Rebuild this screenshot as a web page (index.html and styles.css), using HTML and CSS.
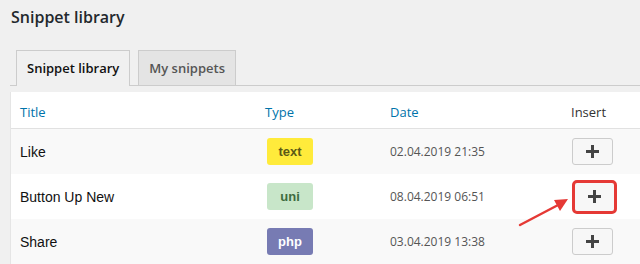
FILE: index.html
```html
<!DOCTYPE html>
<html lang="en">
<head>
    <meta charset="UTF-8">
    <meta name="viewport" content="width=device-width, initial-scale=1.0">
    <title>Snippet library</title>
    <link rel="stylesheet" href="styles.css">
</head>
<body>
    <div class="wrap">
        <h1>Snippet library</h1>

        <!-- Tabs -->
        <div class="tabs">
            <span class="tab active">Snippet library</span>
            <span class="tab">My snippets</span>
        </div>

        <!-- Snippet table -->
        <div class="snippets">
            <div class="row head">
                <div class="cell">Title</div>
                <div class="cell">Type</div>
                <div class="cell">Date</div>
                <div class="cell insert-head">Insert</div>
            </div>
            <div class="row alt">
                <div class="cell title">Like</div>
                <div class="cell"><span class="badge text">text</span></div>
                <div class="cell date">02.04.2019 21:35</div>
                <div class="cell"><button class="add"><svg width="13" height="13" viewBox="0 0 13 13"><path d="M6.5 0v13M0 6.5h13" stroke="#444" stroke-width="3"/></svg></button></div>
            </div>
            <div class="row">
                <div class="cell title">Button Up New</div>
                <div class="cell"><span class="badge uni">uni</span></div>
                <div class="cell date">08.04.2019 06:51</div>
                <div class="cell"><button class="add marked"><svg width="13" height="13" viewBox="0 0 13 13"><path d="M6.5 0v13M0 6.5h13" stroke="#444" stroke-width="3"/></svg></button></div>
            </div>
            <div class="row alt">
                <div class="cell title">Share</div>
                <div class="cell"><span class="badge php">php</span></div>
                <div class="cell date">03.04.2019 13:38</div>
                <div class="cell"><button class="add"><svg width="13" height="13" viewBox="0 0 13 13"><path d="M6.5 0v13M0 6.5h13" stroke="#444" stroke-width="3"/></svg></button></div>
            </div>
        </div>

        <!-- annotation arrow -->
        <svg class="arrow" width="60" height="40" viewBox="0 0 60 40">
            <line x1="4" y1="33" x2="44" y2="12" stroke="#e53935" stroke-width="2.5" stroke-linecap="round"/>
            <polygon points="52,7 38,8 44,19" fill="#e53935"/>
        </svg>
    </div>
</body>
</html>
```

FILE: styles.css
```css
body {
    margin: 0;
    background-color: #f0f0f0;
    font-family: "Open Sans", "Noto Sans", sans-serif;
    color: #23282d;
    overflow: hidden;
}
.wrap {
    position: relative;
    width: 700px;
}
h1 {
    margin: 0;
    padding: 6px 0 0 11px;
    height: 33px;
    font-size: 16px;
    font-weight: 600;
    line-height: 22px;
    color: #23282d;
}
.tabs {
    display: flex;
    gap: 8px;
    margin: 11px 0 0 10px;
    padding-left: 6px;
    border-bottom: 1px solid #ccc;
    height: 35px;
    align-items: flex-end;
}
.tab {
    box-sizing: border-box;
    height: 35px;
    padding: 0 10px;
    border: 1px solid #ccc;
    border-bottom: none;
    background-color: #e4e4e4;
    color: #555;
    font-size: 13px;
    font-weight: 600;
    line-height: 35px;
}
.tab.active {
    background-color: #f0f0f0;
    color: #111;
    height: 36px;
    margin-bottom: -1px;
}
.snippets {
    margin: 6px 0 0 10px;
    background-color: #fff;
    border-left: 1px solid #e5e5e5;
}
.row {
    display: grid;
    grid-template-columns: 245px 125px 181px 120px;
    height: 45px;
    align-items: center;
}
.row.head {
    height: 33px;
    border-bottom: 1px solid #e1e1e1;
    color: #0073aa;
    font-size: 13px;
    padding-top: 3px;
}
.row.alt {
    background-color: #f9f9f9;
}
.cell {
    padding-left: 9px;
}
.insert-head {
    color: #333;
}
.title {
    font-family: "Liberation Sans", Arial, sans-serif;
    font-size: 14px;
    color: #111;
}
.date {
    font-size: 12px;
    color: #555;
}
.badge {
    display: inline-block;
    box-sizing: border-box;
    width: 46px;
    height: 27px;
    margin-left: 2px;
    border-radius: 3px;
    font-family: "Liberation Sans", Arial, sans-serif;
    font-size: 13px;
    font-weight: bold;
    line-height: 27px;
    text-align: center;
}
.badge.text {
    background-color: #ffeb3b;
    color: #5c5a17;
}
.badge.uni {
    background-color: #c8e6c9;
    color: #3e6b40;
}
.badge.php {
    background-color: #777bb3;
    color: #fff;
}
.add {
    display: flex;
    align-items: center;
    justify-content: center;
    box-sizing: border-box;
    width: 41px;
    height: 27px;
    margin-left: 1px;
    padding: 0;
    border: 1px solid #ccc;
    border-radius: 3px;
    background-color: #f7f7f7;
}
.add.marked {
    width: 45px;
    height: 34px;
    border: 3px solid #e53935;
    border-radius: 5px;
}
.arrow {
    position: absolute;
    left: 516px;
    top: 192px;
}
```
